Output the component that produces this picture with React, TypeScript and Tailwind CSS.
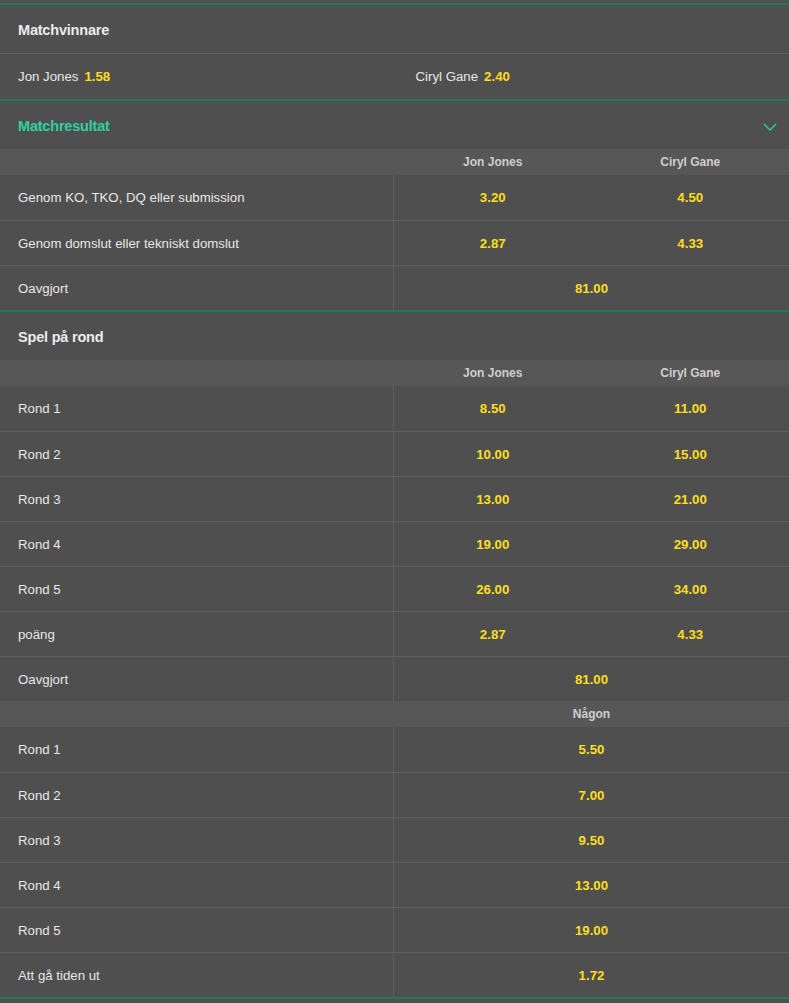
type Row = { label: string; odds: string[] }

const resultRows: Row[] = [
  { label: 'Genom KO, TKO, DQ eller submission', odds: ['3.20', '4.50'] },
  { label: 'Genom domslut eller tekniskt domslut', odds: ['2.87', '4.33'] },
  { label: 'Oavgjort', odds: ['81.00'] },
]

const roundRows: Row[] = [
  { label: 'Rond 1', odds: ['8.50', '11.00'] },
  { label: 'Rond 2', odds: ['10.00', '15.00'] },
  { label: 'Rond 3', odds: ['13.00', '21.00'] },
  { label: 'Rond 4', odds: ['19.00', '29.00'] },
  { label: 'Rond 5', odds: ['26.00', '34.00'] },
  { label: 'poäng', odds: ['2.87', '4.33'] },
  { label: 'Oavgjort', odds: ['81.00'] },
]

const anyRows: Row[] = [
  { label: 'Rond 1', odds: ['5.50'] },
  { label: 'Rond 2', odds: ['7.00'] },
  { label: 'Rond 3', odds: ['9.50'] },
  { label: 'Rond 4', odds: ['13.00'] },
  { label: 'Rond 5', odds: ['19.00'] },
  { label: 'Att gå tiden ut', odds: ['1.72'] },
]

function SectionTitle({ title, active }: { title: string; active?: boolean }) {
  return (
    <div className="h-[50px] flex items-center justify-between pl-[18px] pr-[12px] pt-[3px] border-t-2 border-[#1f7a5c]">
      <span className={`text-[14.5px] font-bold tracking-[-0.2px] ${active ? 'text-[#2fcfa3]' : 'text-[#ececec]'}`}>{title}</span>
      {active && (
        <svg width="14" height="8" viewBox="0 0 14 8" fill="none" stroke="#2fcfa3" strokeWidth="1.3">
          <path d="M1 1l6 6 6-6" />
        </svg>
      )}
    </div>
  )
}

function ColHead({ cols }: { cols: string[] }) {
  return (
    <div className="h-[26px] bg-[#575757] grid grid-cols-[394px_1fr] text-[12px] font-bold text-[#cfcfcf]">
      <div />
      <div className="flex">
        {cols.map(c => (
          <div key={c} className="flex-1 flex items-center justify-center">{c}</div>
        ))}
      </div>
    </div>
  )
}

function OddsRow({ row }: { row: Row }) {
  return (
    <div className="h-[45px] grid grid-cols-[394px_1fr] border-t border-[#5f5f5f] first:border-t-0">
      <div className="flex items-center pl-[18px] pt-[1px] text-[13.25px] text-[#e8e8e8] border-r border-[#5f5f5f]">{row.label}</div>
      <div className="flex">
        {row.odds.map((o, i) => (
          <div key={i} className="flex-1 flex items-center justify-center pt-[1px] text-[13.25px] font-bold text-[#ffdf1b]">{o}</div>
        ))}
      </div>
    </div>
  )
}

export default function App() {
  return (
    <div className="w-[789px] h-[1003px] bg-[#4f4f4f] pt-[3px] overflow-hidden" style={{ fontFamily: '"Liberation Sans", Arial, sans-serif' }}>
      {/* Matchvinnare */}
      <SectionTitle title="Matchvinnare" />
      <div className="h-[46px] grid grid-cols-2 border-t border-[#5f5f5f] text-[13.25px]">
        <div className="flex items-center gap-[6px] pl-[18px] pt-[1px]">
          <span className="text-[#e8e8e8]">Jon Jones</span>
          <span className="font-bold text-[#ffdf1b]">1.58</span>
        </div>
        <div className="flex items-center gap-[6px] pl-[21px] pt-[1px]">
          <span className="text-[#e8e8e8]">Ciryl Gane</span>
          <span className="font-bold text-[#ffdf1b]">2.40</span>
        </div>
      </div>

      {/* Matchresultat */}
      <SectionTitle title="Matchresultat" active />
      <ColHead cols={['Jon Jones', 'Ciryl Gane']} />
      <div>
        {resultRows.map(r => <OddsRow key={r.label} row={r} />)}
      </div>

      {/* Spel på rond */}
      <SectionTitle title="Spel på rond" />
      <ColHead cols={['Jon Jones', 'Ciryl Gane']} />
      <div>
        {roundRows.map(r => <OddsRow key={r.label} row={r} />)}
      </div>
      <ColHead cols={['Någon']} />
      <div>
        {anyRows.map(r => <OddsRow key={r.label} row={r} />)}
      </div>
      <div className="border-t-2 border-[#1f7a5c]" />
    </div>
  )
}
